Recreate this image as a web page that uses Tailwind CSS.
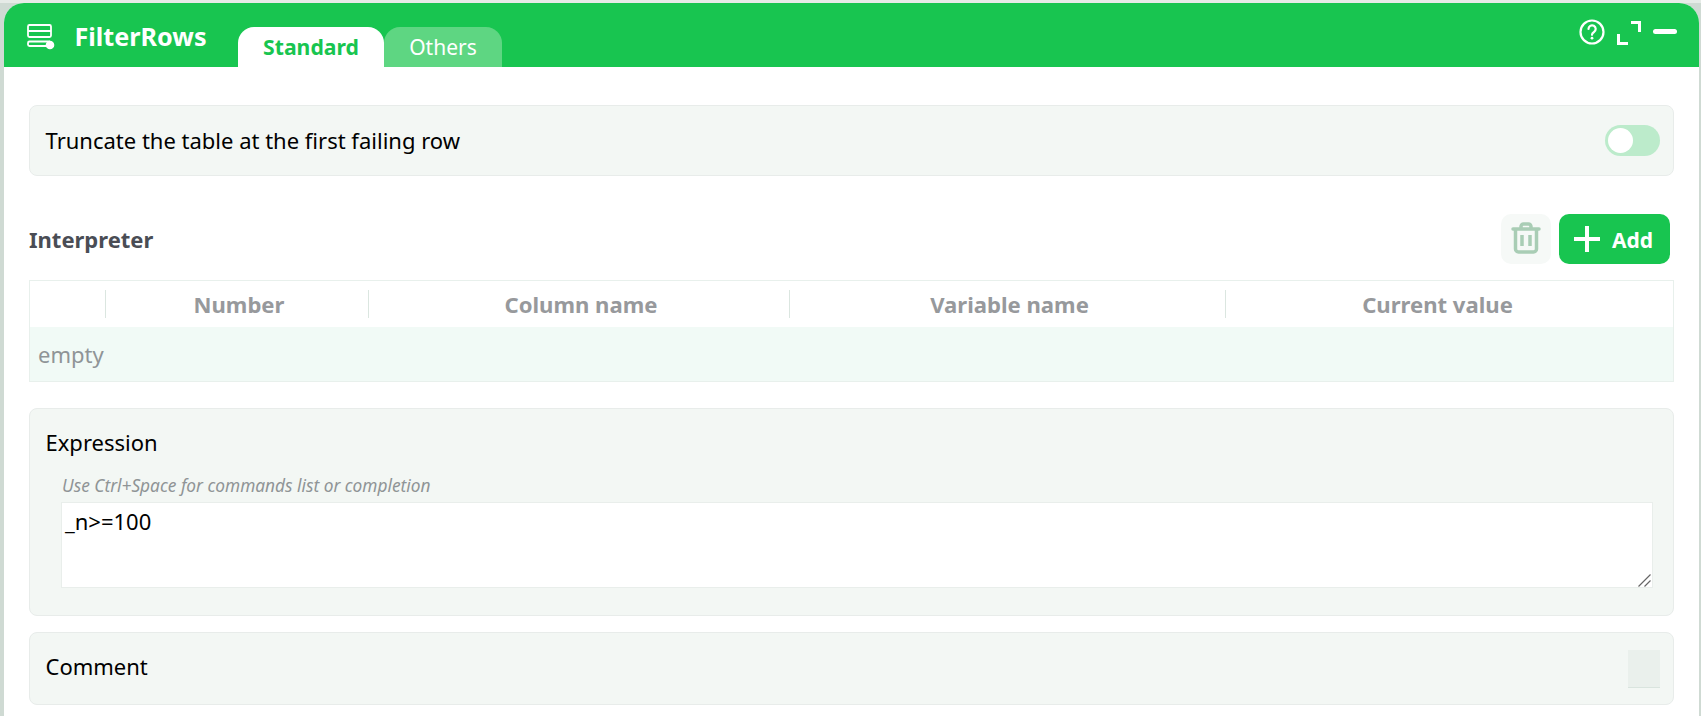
<!DOCTYPE html>
<html lang="en">

<head>
    <meta charset="UTF-8">
    <title>FilterRows</title>
    <script src="https://cdn.jsdelivr.net/npm/@tailwindcss/browser@4"></script>
</head>

<body class="bg-[#cfdad3] h-[716px] overflow-hidden font-['Noto_Sans',sans-serif]">
    <div class="h-[3px] bg-[#e6ebe7]"></div>
    <div class="ml-[4px] mr-[2px] h-[713px] bg-white rounded-t-[20px] overflow-hidden">

        <!-- header -->
        <div class="h-[64px] bg-[#18c550] flex items-end relative">
            <svg class="absolute left-[22px] top-[20px]" width="34" height="30" viewBox="0 0 34 30" fill="none" stroke="white" stroke-width="1.800">
                <rect x="2" y="2" width="23" height="12" rx="1.500" />
                <path d="M2 8h23" />
                <path d="M24 18.500H3.500A1.500 1.500 0 0 0 2 20v1.500A1.500 1.500 0 0 0 3.500 23H21" />
                <circle cx="24" cy="22" r="4.300" fill="white" stroke="none" />
            </svg>
            <div class="absolute left-[70.500px] top-[17px] text-[25.200px] leading-[32px] font-bold text-white">FilterRows</div>
            <div class="ml-[234px] w-[146px] h-[40px] bg-white rounded-t-[16px] text-[#18c550] font-bold text-[21.200px] flex items-center justify-center">Standard</div>
            <div class="w-[118px] h-[40px] bg-[#5ed682] rounded-t-[16px] text-white text-[21px] leading-[30px] flex items-center justify-center">Others</div>

            <div class="absolute right-[22px] top-[16px] flex items-start">
                <svg width="26" height="26" viewBox="0 0 26 26" fill="none" stroke="white" stroke-width="2.200">
                    <circle cx="13" cy="13" r="11.500" />
                    <path d="M9.500 10a3.600 3.600 0 1 1 5.500 3c-1.300.8-2 1.400-2 2.800" stroke-linecap="round" />
                    <circle cx="13" cy="19.200" r="1.400" fill="white" stroke="none" />
                </svg>
                <svg class="ml-[12px] mt-[2px]" width="24" height="24" viewBox="0 0 24 24" fill="none" stroke="white" stroke-width="3">
                    <path d="M14 1.500h8.500V11" />
                    <path d="M1.500 13v9.500H11" />
                </svg>
                <div class="ml-[12px] mt-[10px] w-[24px] h-[5px] rounded-full bg-white"></div>
            </div>
        </div>

        <div class="px-[25px] pt-[38px]">
            <!-- truncate -->
            <div class="h-[71px] bg-[#f3f7f4] border border-[#e8ecea] rounded-[8px] pl-[15.500px] pr-[13px] flex items-center justify-between">
                <div class="text-[22px] text-black">Truncate the table at the first failing row</div>
                <div class="w-[55px] h-[31px] rounded-full bg-[#bcebcb] pl-[3px] flex items-center">
                    <div class="w-[25px] h-[25px] rounded-full bg-white"></div>
                </div>
            </div>

            <!-- interpreter -->
            <div class="mt-[38px] h-[51px] flex items-start justify-between pr-[4px]">
                <div class="mt-[9px] text-[22px] leading-[32px] font-bold text-[#4a4d55]">Interpreter</div>
                <div class="flex gap-[8px]">
                    <div class="w-[50px] h-[50px] rounded-[10px] bg-[#f6f9f7] flex items-center justify-center pb-[2px]">
                        <svg width="30" height="32" viewBox="0 0 30 32" fill="none" stroke="#a9cdb5" stroke-width="3.500">
                            <path d="M2 7h26" stroke-linecap="round" />
                            <path d="M10 6V4.500A2.500 2.500 0 0 1 12.500 2h5A2.500 2.500 0 0 1 20 4.500V6" />
                            <path d="M4.500 7v20a3 3 0 0 0 3 3h15a3 3 0 0 0 3-3V7" />
                            <path d="M11 13v11M19 13v11" />
                        </svg>
                    </div>
                    <div class="w-[111px] h-[50px] rounded-[10px] bg-[#18c550] flex items-center pl-[15px]">
                        <svg width="26" height="26" viewBox="0 0 26 26" stroke="white" stroke-width="4">
                            <path d="M13 0v26M0 13h26" />
                        </svg>
                        <span class="ml-[12px] pt-[3px] text-[21px] font-bold text-white">Add</span>
                    </div>
                </div>
            </div>

            <!-- table -->
            <div class="mt-[15px] border border-[#e8f0ec]">
                <div class="h-[46px] grid grid-cols-[75px_263px_421px_436px_422px] items-center text-[22.100px] font-bold text-[#97999c] text-center">
                    <div class="h-[28px]"></div>
                    <div class="h-[28px] leading-[28px] pl-[4px] border-l border-[#dbe6e0]">Number</div>
                    <div class="h-[28px] leading-[28px] pl-[4px] border-l border-[#dbe6e0]">Column name</div>
                    <div class="h-[28px] leading-[28px] pl-[4px] border-l border-[#dbe6e0]">Variable name</div>
                    <div class="h-[28px] leading-[28px] pl-[2px] border-l border-[#dbe6e0]">Current value</div>
                </div>
                <div class="h-[54px] bg-[#f1faf6] pl-[8px] flex items-center text-[22px] text-[#8f9496]">empty</div>
            </div>

            <!-- expression -->
            <div class="mt-[26px] h-[208px] bg-[#f3f7f4] border border-[#e8ecea] rounded-[8px] pt-[19px] pl-[15.500px] pr-[20px]">
                <div class="text-[22px] leading-[28px] text-black">Expression</div>
                <div class="mt-[18px] ml-[16.500px] text-[17.300px] leading-[24px] italic text-[#8f9496]">Use Ctrl+Space for commands list or completion</div>
                <div class="relative mt-[4px] ml-[15.500px] w-[1592px] h-[86px]">
                    <textarea class="block w-full h-full resize-none bg-white border border-[#e9eeeb] px-[3px] py-[2px] text-[22px] leading-[32px] text-black outline-none">_n&gt;=100</textarea>
                    <svg class="absolute right-[2px] bottom-[1px]" width="13" height="13" viewBox="0 0 13 13" stroke="#666" stroke-width="1.200">
                        <path d="M0.500 12.500 12.500 0.500M6.500 12.500 12.500 6.500" />
                    </svg>
                </div>
            </div>

            <!-- comment -->
            <div class="mt-[16px] h-[73px] bg-[#f3f7f4] border border-[#e8ecea] rounded-[8px] pl-[15.500px] pr-[13px] pb-[5px] flex items-center justify-between">
                <div class="text-[22px] text-black">Comment</div>
                <div class="mt-[5px] w-[32px] h-[38px] bg-[#eaf0ec] border-b border-[#d9e4de]"></div>
            </div>
        </div>
    </div>
</body>

</html>
